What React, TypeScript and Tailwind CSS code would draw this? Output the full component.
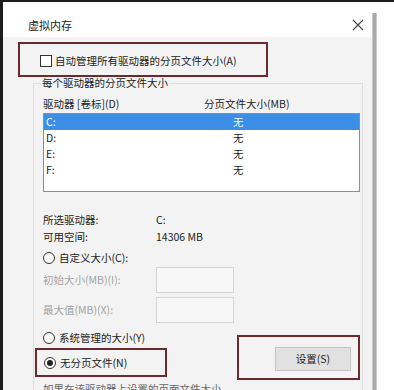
import React from 'react';

const font = { fontFamily: '"Noto Sans CJK SC", "Noto Sans", sans-serif' };

const Radio: React.FC<{ checked?: boolean; label: string }> = ({ checked, label }) => (
  <div className="flex items-center h-[16px]">
    <span className="w-[12px] h-[12px] rounded-full border border-[#333] bg-white flex items-center justify-center">
      {checked && <span className="w-[6px] h-[6px] rounded-full bg-[#222]" />}
    </span>
    <span className="ml-[4px] text-[10.5px] text-[#222]">{label}</span>
  </div>
);

const drives = ['C:', 'D:', 'E:', 'F:'];

export default function App() {
  return (
    <div
      className="w-[394px] h-[390px] overflow-hidden bg-white flex border-l-[3px] border-t-2 border-[#1c1c1c]"
      style={font}
    >
      <div className="w-[369px] shrink-0 flex flex-col overflow-hidden">
        {/* title bar */}
        <div className="h-[35px] shrink-0 bg-white flex items-start justify-between pl-[25px] pr-[8px] pt-[16px]">
          <span className="text-[11px] leading-[15px] text-[#222]">虚拟内存</span>
          <svg width="12" height="12" viewBox="0 0 12 12" className="mt-[1px]">
            <path d="M1 1 L11 11 M11 1 L1 11" stroke="#444" strokeWidth="1.1" />
          </svg>
        </div>

        <div className="flex-1 min-h-0 bg-[#f3f3f3] flex flex-col">
          {/* auto manage checkbox */}
          <div className="shrink-0 mt-[5px] ml-[15px] w-[250px] h-[35px] border-2 border-[#6d2a2e] flex items-center pl-[20px] pt-[2px]">
            <span className="w-[12px] h-[12px] border border-[#333] bg-white" />
            <span className="ml-[3px] text-[10.5px] text-[#222]">自动管理所有驱动器的分页文件大小(A)</span>
          </div>

          {/* group box */}
          <fieldset className="shrink-0 ml-[30px] w-[330px] border border-[#dedede] pl-[9px] pr-[2px] pb-[10px] mt-[-1px]">
            <legend className="text-[10.5px] text-[#222] ml-[-2px] px-[1px] leading-[14px]">每个驱动器的分页文件大小</legend>

            <div className="flex text-[10.5px] text-[#222] h-[16px] items-center mt-[6px]">
              <span className="w-[161px]">驱动器 [卷标](D)</span>
              <span>分页文件大小(MB)</span>
            </div>

            <div className="mt-[1px] h-[79px] border border-[#8a8e96] bg-white">
              {drives.map((d, i) => (
                <div
                  key={d}
                  className={`flex h-[16px] items-center text-[10.5px] ${i === 0 ? 'bg-[#3c8ee6] text-white' : 'text-[#222]'}`}
                >
                  <span className="w-[189px] pl-[2px]">{d}</span>
                  <span>无</span>
                </div>
              ))}
            </div>

            <div className="mt-[19px] text-[10.5px] text-[#222]">
              <div className="flex h-[17px] items-center">
                <span className="w-[113px]">所选驱动器:</span>
                <span>C:</span>
              </div>
              <div className="flex h-[17px] items-center">
                <span className="w-[113px]">可用空间:</span>
                <span>14306 MB</span>
              </div>
            </div>

            <div className="mt-[5px]">
              <Radio label="自定义大小(C):" />
            </div>

            <div className="flex items-center mt-[1px] h-[26px]">
              <span className="w-[113px] text-[10.5px] text-[#a3a3a3]">初始大小(MB)(I):</span>
              <span className="w-[78px] h-[26px] border border-[#d4d4d4] bg-[#f7f7f7]" />
            </div>
            <div className="flex items-center mt-[4px] h-[26px]">
              <span className="w-[113px] text-[10.5px] text-[#a3a3a3]">最大值(MB)(X):</span>
              <span className="w-[78px] h-[26px] border border-[#d4d4d4] bg-[#f7f7f7]" />
            </div>

            <div className="flex items-start mt-[7px]">
              <div className="flex flex-col">
                <Radio label="系统管理的大小(Y)" />
                <div className="ml-[-8px] mt-[2px] w-[132px] h-[29px] border-2 border-[#6d2a2e] flex items-center pl-[7px]">
                  <Radio checked label="无分页文件(N)" />
                </div>
              </div>
              <div className="ml-[70px] mt-[5px] w-[123px] h-[45px] border-2 border-[#6d2a2e] flex items-center pl-[36px] pt-[3px]">
                <button className="w-[76px] h-[24px] bg-[#e1e1e1] border border-[#c4c4c4] text-[10.5px] text-[#222]">
                  设置(S)
                </button>
              </div>
            </div>

            <div className="mt-[1px] text-[10.5px] text-[#666] h-[14px]">如果在该驱动器上设置的页面文件太小</div>
          </fieldset>
        </div>
      </div>
      <div className="w-[5px] mt-[11px] bg-[#a9a9a9] border-x border-[#c8c8c8]" />
      <div className="flex-1 bg-white" />
    </div>
  );
}
